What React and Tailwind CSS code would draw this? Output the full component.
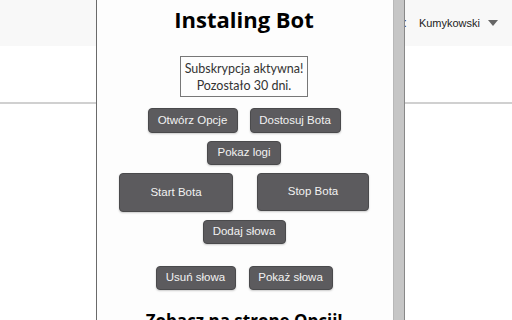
import React from "react";

const Btn = ({ children, className = "" }) => (
  <button
    className={
      "shrink-0 bg-[#5c5b5e] text-[#f2f2f2] rounded-[4px] border border-[#4a4a4c] text-[11.5px] shadow-[0_1px_2px_rgba(0,0,0,0.2)] " +
      className
    }
    style={{ fontFamily: '"Liberation Sans", Arial, sans-serif' }}
  >
    {children}
  </button>
);

const App = () => {
  return (
    <div className="relative w-[512px] h-[320px] overflow-hidden bg-white">
      {/* page behind the popup */}
      <div className="h-[46px] bg-[#f8f8f8] flex items-center justify-end pr-[14px]">
        <span
          className="text-[12px] text-[#333] mr-[12px]"
          style={{ fontFamily: '"Liberation Sans", Arial, sans-serif' }}
        >
          :
        </span>
        <span
          className="text-[11px] text-[#222]"
          style={{ fontFamily: '"Liberation Sans", Arial, sans-serif' }}
        >
          Kumykowski
        </span>
        <span className="ml-[8px] w-0 h-0 border-l-[5px] border-r-[5px] border-t-[6px] border-l-transparent border-r-transparent border-t-[#666]"></span>
      </div>
      <div className="h-[58px] bg-white border-b-2 border-[#d0d0d0]"></div>
      <div className="bg-white"></div>

      {/* extension popup */}
      <div className="absolute left-[96px] top-0 h-[320px] w-[309px] flex overflow-hidden border-l border-[#6a6a6a] border-r border-r-[#888]">
        <div
          className="w-[296px] bg-[#fdfdfd] flex flex-col items-center pr-[2px]"
          style={{ fontFamily: '"Open Sans", "Noto Sans", sans-serif' }}
        >
          <h1 className="shrink-0 mt-[3px] text-[22px] leading-[32px] font-bold text-black">
            Instaling Bot
          </h1>
          <div
            className="shrink-0 mt-[21px] w-[128px] h-[41px] border border-[#777] flex flex-col items-center justify-center text-[12.5px] leading-[17px] text-[#333]"
            style={{ fontFamily: 'Lato, "Open Sans", sans-serif' }}
          >
            <span>Subskrypcja aktywna!</span>
            <span>Pozostało 30 dni.</span>
          </div>
          <div className="shrink-0 mt-[11px] flex gap-[12px]">
            <Btn className="w-[90px] h-[25px]">Otwórz Opcje</Btn>
            <Btn className="w-[91px] h-[25px]">Dostosuj Bota</Btn>
          </div>
          <Btn className="mt-[8px] w-[74px] h-[24px]">Pokaz logi</Btn>
          <div className="shrink-0 mt-[8px] flex gap-[24px]">
            <Btn className="w-[114px] h-[39px]">Start Bota</Btn>
            <Btn className="w-[112px] h-[38px]">Stop Bota</Btn>
          </div>
          <Btn className="mt-[8px] w-[83px] h-[24px]">Dodaj słowa</Btn>
          <div className="shrink-0 mt-[22px] flex gap-[13px]">
            <Btn className="w-[80px] h-[24px]">Usuń słowa</Btn>
            <Btn className="w-[84px] h-[24px]">Pokaż słowa</Btn>
          </div>
          <h2 className="shrink-0 mt-[19px] text-[17px] leading-[24px] font-bold text-black whitespace-nowrap">
            Zobacz na stronę Opcji!
          </h2>
        </div>
        <div className="w-[11px] h-full bg-[#c6c6c6] border-l border-[#b8b8b8]"></div>
      </div>
    </div>
  );
};

export default App;
